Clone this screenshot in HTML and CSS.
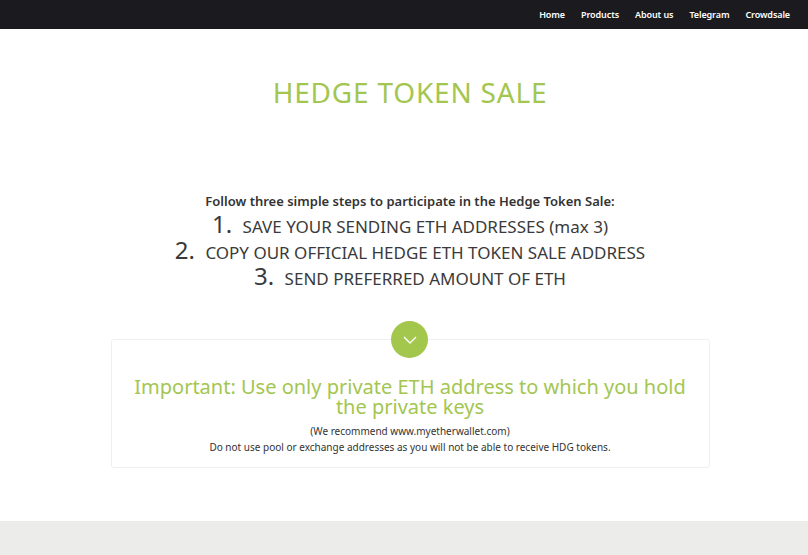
FILE: index.html
```html
<!DOCTYPE html>
<html>
<head>
    <title>Hedge Token Sale</title>
    <meta name="viewport" content="width=device-width, initial-scale=1.0">
    <link rel="stylesheet" href="styles.css">
</head>
<body>
    <nav class="topbar">
        <a href="#">Home</a>
        <a href="#">Products</a>
        <a href="#">About us</a>
        <a href="#">Telegram</a>
        <a href="#">Crowdsale</a>
    </nav>

    <section class="sale">
        <h1 class="sale-title">HEDGE TOKEN SALE</h1>

        <p class="steps-intro">Follow three simple steps to participate in the Hedge Token Sale:</p>
        <ol class="steps">
            <li><span class="num">1.</span> SAVE YOUR SENDING ETH ADDRESSES (max 3)</li>
            <li><span class="num">2.</span> COPY OUR OFFICIAL HEDGE ETH TOKEN SALE ADDRESS</li>
            <li><span class="num">3.</span> SEND PREFERRED AMOUNT OF ETH</li>
        </ol>

        <div class="notice">
            <span class="notice-arrow">
                <svg width="14" height="8" viewBox="0 0 14 8"><path d="M1 1l6 6 6-6" fill="none" stroke="#fff" stroke-width="1.4"/></svg>
            </span>
            <h2 class="notice-title">Important: Use only private ETH address to which you hold the private keys</h2>
            <p class="notice-small">(We recommend www.myetherwallet.com)</p>
            <p class="notice-small">Do not use pool or exchange addresses as you will not be able to receive HDG tokens.</p>
        </div>
    </section>

    <footer class="footer-band"></footer>
</body>
</html>
```

FILE: styles.css
```css
body {
    margin: 0;
    font-family: 'Noto Sans', 'DejaVu Sans', sans-serif;
    color: #333;
    background: #fff;
}

/* Top navigation */
.topbar {
    height: 29px;
    background: #1b1b1f;
    display: flex;
    justify-content: flex-end;
    align-items: center;
    padding-right: 18px;
    gap: 16px;
}

.topbar a {
    color: #fff;
    text-decoration: none;
    font-size: 9px;
    font-weight: 600;
    letter-spacing: -0.1px;
}

/* Sale section */
.sale {
    text-align: center;
    padding: 46px 0 0 12px;
    height: 492px;
    box-sizing: border-box;
}

.sale-title {
    margin: 0;
    font-weight: normal;
    font-size: 28px;
    line-height: 34px;
    color: #a3c651;
    letter-spacing: 0.8px;
}

.steps-intro {
    margin: 82px 0 0;
    font-size: 13px;
    font-weight: 600;
    color: #333;
    line-height: 20px;
}

.steps {
    list-style: none;
    margin: 0;
    padding: 0;
    font-size: 17px;
    line-height: 26px;
    color: #3a3a3a;
}

.steps li {
    height: 26px;
    display: flex;
    justify-content: center;
    align-items: baseline;
    white-space: pre;
}

.steps .num {
    font-size: 24px;
    line-height: 26px;
    margin-right: 6px;
}

.notice {
    position: relative;
    margin: 50px auto 0;
    width: 599px;
    box-sizing: border-box;
    border: 1px solid #efefef;
    border-radius: 3px;
    padding: 37px 20px 12px;
}

.notice-arrow {
    position: absolute;
    top: -19px;
    left: 50%;
    margin-left: -19px;
    width: 37px;
    height: 37px;
    border-radius: 50%;
    background: #a3c64d;
    display: flex;
    align-items: center;
    justify-content: center;
}

.notice-title {
    margin: 0 0 6px;
    font-weight: normal;
    font-size: 20px;
    line-height: 20px;
    color: #a3c651;
}

.notice-small {
    margin: 0;
    font-size: 10px;
    line-height: 16px;
    color: #333;
}

.footer-band {
    height: 60px;
    background: #ecedea;
}
```
